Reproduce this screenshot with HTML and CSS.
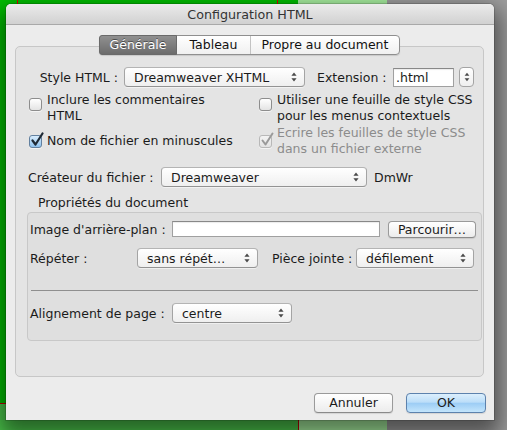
FILE: index.html
```html
<!DOCTYPE html>
<html lang="fr">
<head>
<meta charset="utf-8">
<title>Configuration HTML</title>
<link rel="stylesheet" href="styles.css">
</head>
<body>
<div class="dialog">
  <div class="titlebar">Configuration HTML</div>
  <div class="content">
    <div class="tabs">
      <span class="tab tab-sel">Générale</span>
      <span class="tab tab-2">Tableau</span>
      <span class="tab tab-3">Propre au document</span>
    </div>
    <div class="panel">
      <div class="row row-style">
        <span class="lbl lbl-style">Style HTML :</span>
        <div class="popup pop-style"><span>Dreamweaver XHTML</span><svg class="arrows" width="6" height="10" viewBox="0 0 6 10"><path d="M3 0.5 L5.6 3.8 H0.4Z M3 9.5 L5.6 6.2 H0.4Z" fill="#4a4a4a"/></svg></div>
        <span class="lbl lbl-ext">Extension :</span>
        <div class="field field-ext">.html</div>
        <div class="stepper"><svg width="6" height="10" viewBox="0 0 6 10"><path d="M3 0.8 L5.4 3.8 H0.6Z M3 9.2 L5.4 6.2 H0.6Z" fill="#4a4a4a"/></svg></div>
      </div>

      <div class="checks">
        <div class="check two">
          <span class="box box-top"></span>
          <span class="ctext">Inclure les commentaires<br>HTML</span>
        </div>
        <div class="check two">
          <span class="box box-top"></span>
          <span class="ctext">Utiliser une feuille de style CSS<br>pour les menus contextuels</span>
        </div>
        <div class="check">
          <span class="box box-on"><svg class="tick" width="14" height="15" viewBox="0 0 14 15"><path d="M2.5 8.5 L5.5 12.5 L12.5 1.5" fill="none" stroke="#1e2a36" stroke-width="2.2" stroke-linecap="round" stroke-linejoin="round"/></svg></span>
          <span class="ctext">Nom de fichier en minuscules</span>
        </div>
        <div class="check two dis">
          <span class="box box-dis"><svg class="tick" width="14" height="15" viewBox="0 0 14 15"><path d="M2.5 8.5 L5.5 12.5 L12.5 1.5" fill="none" stroke="#9a9a9a" stroke-width="2" stroke-linecap="round" stroke-linejoin="round"/></svg></span>
          <span class="ctext">Ecrire les feuilles de style CSS<br>dans un fichier externe</span>
        </div>
      </div>

      <div class="row row-creator">
        <span class="lbl lbl-creator">Créateur du fichier :</span>
        <div class="popup pop-creator"><span>Dreamweaver</span><svg class="arrows" width="6" height="10" viewBox="0 0 6 10"><path d="M3 0.5 L5.6 3.8 H0.4Z M3 9.5 L5.6 6.2 H0.4Z" fill="#4a4a4a"/></svg></div>
        <span class="lbl lbl-code">DmWr</span>
      </div>

      <div class="legend">Propriétés du document</div>
      <div class="group">
        <div class="row row-image">
          <span class="lbl lbl-image">Image d'arrière-plan :</span>
          <div class="field field-image"></div>
          <div class="button btn-browse">Parcourir…</div>
        </div>
        <div class="row row-repeat">
          <span class="lbl lbl-repeat">Répéter :</span>
          <div class="popup pop-repeat"><span>sans répét…</span><svg class="arrows" width="6" height="10" viewBox="0 0 6 10"><path d="M3 0.5 L5.6 3.8 H0.4Z M3 9.5 L5.6 6.2 H0.4Z" fill="#4a4a4a"/></svg></div>
          <span class="lbl lbl-attach">Pièce jointe :</span>
          <div class="popup pop-attach"><span>défilement</span><svg class="arrows" width="6" height="10" viewBox="0 0 6 10"><path d="M3 0.5 L5.6 3.8 H0.4Z M3 9.5 L5.6 6.2 H0.4Z" fill="#4a4a4a"/></svg></div>
        </div>
        <div class="separator"></div>
        <div class="row row-align">
          <span class="lbl lbl-align">Alignement de page :</span>
          <div class="popup pop-align"><span>centre</span><svg class="arrows" width="6" height="10" viewBox="0 0 6 10"><path d="M3 0.5 L5.6 3.8 H0.4Z M3 9.5 L5.6 6.2 H0.4Z" fill="#4a4a4a"/></svg></div>
        </div>
      </div>
    </div>

    <div class="buttons">
      <div class="button btn-cancel">Annuler</div>
      <div class="button btn-ok">OK</div>
    </div>
  </div>
</div>
</body>
</html>
```

FILE: styles.css
```css
html, body {
  margin: 0;
  padding: 0;
  width: 507px;
  height: 430px;
  overflow: hidden;
}

body {
  font-family: "DejaVu Sans", "Noto Sans", sans-serif;
  font-size: 12.5px;
  color: #1b1b1b;
  background:
    linear-gradient(#e00000, #e00000) 17px 0 / 1px 4px no-repeat,
    linear-gradient(#e00000, #e00000) 277px 0 / 1px 4px no-repeat,
    linear-gradient(#c00000, #c00000) 0 403px / 298px 1px no-repeat,
    linear-gradient(#c00000, #c00000) 298px 403px / 1px 27px no-repeat,
    linear-gradient(#4cc84c, #4cc84c) 0 404px / 298px 26px no-repeat,
    linear-gradient(to right, #00c000 0, #00c000 298px, #a8f0a0 298px, #a8f0a0 387px, #9e9e9e 387px) 0 0 / 100% 100% no-repeat;
}

.dialog {
  width: 488px;
  height: 416px;
  margin: 4px 0 0 6px;
  background: #ececec;
  border-radius: 5px 5px 0 0;
  box-shadow: 0 10px 22px 6px rgba(0, 0, 0, 0.5), 0 0 0 1px rgba(0, 0, 0, 0.15);
  display: flex;
  flex-direction: column;
}

.titlebar {
  height: 21px;
  box-sizing: border-box;
  line-height: 21px;
  text-align: center;
  font-size: 12.7px;
  color: #333;
  background: linear-gradient(#ebebeb, #d1d1d1);
  border-bottom: 1px solid #a9a9a9;
  border-radius: 5px 5px 0 0;
}

.content {
  padding: 10px 10px 7px 9px;
  display: flex;
  flex-direction: column;
}

/* Tabs */
.tabs {
  align-self: center;
  display: flex;
  width: 301px;
  height: 20px;
  box-sizing: border-box;
  border: 1px solid #8f8f8f;
  border-radius: 4px;
  background: linear-gradient(#ffffff, #f0f0f0);
  position: relative;
  z-index: 1;
  box-shadow: 0 1px 1px rgba(0, 0, 0, 0.12);
}

.tab {
  box-sizing: border-box;
  line-height: 18px;
  text-align: center;
  color: #111;
}

.tab-sel {
  width: 78px;
  background: linear-gradient(#909090, #6c6c6c);
  color: #fff;
  text-shadow: 0 -1px 0 rgba(0, 0, 0, 0.45);
  border-radius: 3px 0 0 3px;
  margin: -1px 0 -1px -1px;
  border: 1px solid #6a6a6a;
}

.tab-2 {
  width: 73px;
}

.tab-3 {
  width: 149px;
  border-left: 1px solid #c3c3c3;
}

/* Panel */
.panel {
  margin-top: -9px;
  border: 1px solid #c7c7c7;
  border-radius: 5px;
  background: #e4e4e4;
  padding: 20px 0 35px 0;
}

.row {
  display: flex;
  align-items: center;
  height: 20px;
}

.lbl {
  white-space: nowrap;
}

.row-style {
  margin-left: 12px;
}

.lbl-style {
  width: 90px;
  text-align: right;
}

.pop-style {
  margin-left: 6px;
  width: 181px;
}

.lbl-ext {
  margin-left: 12px;
  width: 74px;
}

.popup {
  height: 20px;
  box-sizing: border-box;
  border: 1px solid #a4a4a4;
  border-top-color: #b4b4b4;
  border-bottom-color: #939393;
  border-radius: 4px;
  background: linear-gradient(#ffffff, #efefef);
  display: flex;
  align-items: center;
  justify-content: space-between;
  padding: 0 7px 0 9px;
  white-space: nowrap;
  box-shadow: 0 1px 0 rgba(255, 255, 255, 0.5);
}

.field {
  box-sizing: border-box;
  background: #fff;
  border: 1px solid #a0a0a0;
  border-top-color: #888;
  box-shadow: inset 0 1px 1px rgba(0, 0, 0, 0.08);
}

.field-ext {
  margin-left: 2px;
  width: 61px;
  height: 19px;
  padding-left: 2px;
  line-height: 17px;
}

.stepper {
  margin-left: 5px;
  width: 15px;
  height: 20px;
  box-sizing: border-box;
  border: 1px solid #a4a4a4;
  border-radius: 4px;
  background: linear-gradient(#ffffff, #efefef);
  display: flex;
  align-items: center;
  justify-content: center;
}

/* Checkboxes */
.checks {
  display: grid;
  grid-template-columns: 230px 1fr;
  row-gap: 1px;
  margin: 5px 0 0 13px;
  align-items: center;
}

.check {
  display: flex;
  align-items: center;
  gap: 5px;
  line-height: 16px;
  white-space: nowrap;
}

.check.two {
  height: 32px;
}

.dis .ctext {
  color: #8c8c8c;
}

.box {
  width: 13px;
  height: 13px;
  box-sizing: border-box;
  border: 1px solid #8d8d8d;
  border-radius: 3px;
  background: linear-gradient(#ffffff, #e4e4e4);
  flex: none;
  position: relative;
  box-shadow: 0 1px 0 rgba(255, 255, 255, 0.6);
}

.box-top {
  align-self: flex-start;
  margin-top: 6px;
}

.box-on {
  background: linear-gradient(#d8ecfc, #8ec2ef);
  border-color: #62809f;
}

.box-dis {
  background: linear-gradient(#f3f3f3, #e3e3e3);
  border-color: #b8b8b8;
}

.tick {
  position: absolute;
  left: 0;
  top: -4px;
}

/* Creator row */
.row-creator {
  margin: 10px 0 0 12px;
}

.lbl-creator {
  width: 133px;
}

.pop-creator {
  width: 206px;
}

.lbl-code {
  margin-left: 7px;
}

.legend {
  margin: 8px 0 0 22px;
  line-height: 16px;
  height: 16px;
}

/* Group box */
.group {
  margin: 1px 1px 0 11px;
  border: 1px solid #c8c8c8;
  border-radius: 4px;
  background: #dfdfdf;
  padding: 8px 0 17px 2px;
}

.row-image {
  height: 17px;
  align-items: flex-start;
}

.lbl-image {
  width: 142px;
  line-height: 17px;
}

.field-image {
  width: 208px;
  height: 16px;
}

.button {
  box-sizing: border-box;
  border: 1px solid #9a9a9a;
  border-bottom-color: #8a8a8a;
  border-radius: 4px;
  background: linear-gradient(#ffffff, #ececec);
  text-align: center;
  white-space: nowrap;
  box-shadow: 0 1px 1px rgba(0, 0, 0, 0.1);
}

.btn-browse {
  margin-left: 8px;
  width: 88px;
  height: 17px;
  line-height: 15px;
}

.row-repeat {
  margin-top: 10px;
}

.lbl-repeat {
  width: 107px;
}

.pop-repeat {
  width: 121px;
}

.lbl-attach {
  margin-left: 14px;
  width: 84px;
}

.pop-attach {
  width: 118px;
}

.separator {
  margin: 22px 3px 0 1px;
  height: 1px;
  background: #8f8f8f;
}

.row-align {
  margin-top: 12px;
}

.lbl-align {
  width: 142px;
}

.pop-align {
  width: 120px;
}

/* Bottom buttons */
.buttons {
  margin: 16px -2px 0 0;
  display: flex;
  justify-content: flex-end;
  gap: 13px;
}

.buttons .button {
  height: 20px;
  line-height: 18px;
}

.btn-cancel {
  width: 79px;
}

.btn-ok {
  width: 80px;
  border-color: #5d82ad;
  background: linear-gradient(#dceffd 0%, #bcdef9 45%, #9dcdf5 52%, #c3e5fc 100%);
}
```
